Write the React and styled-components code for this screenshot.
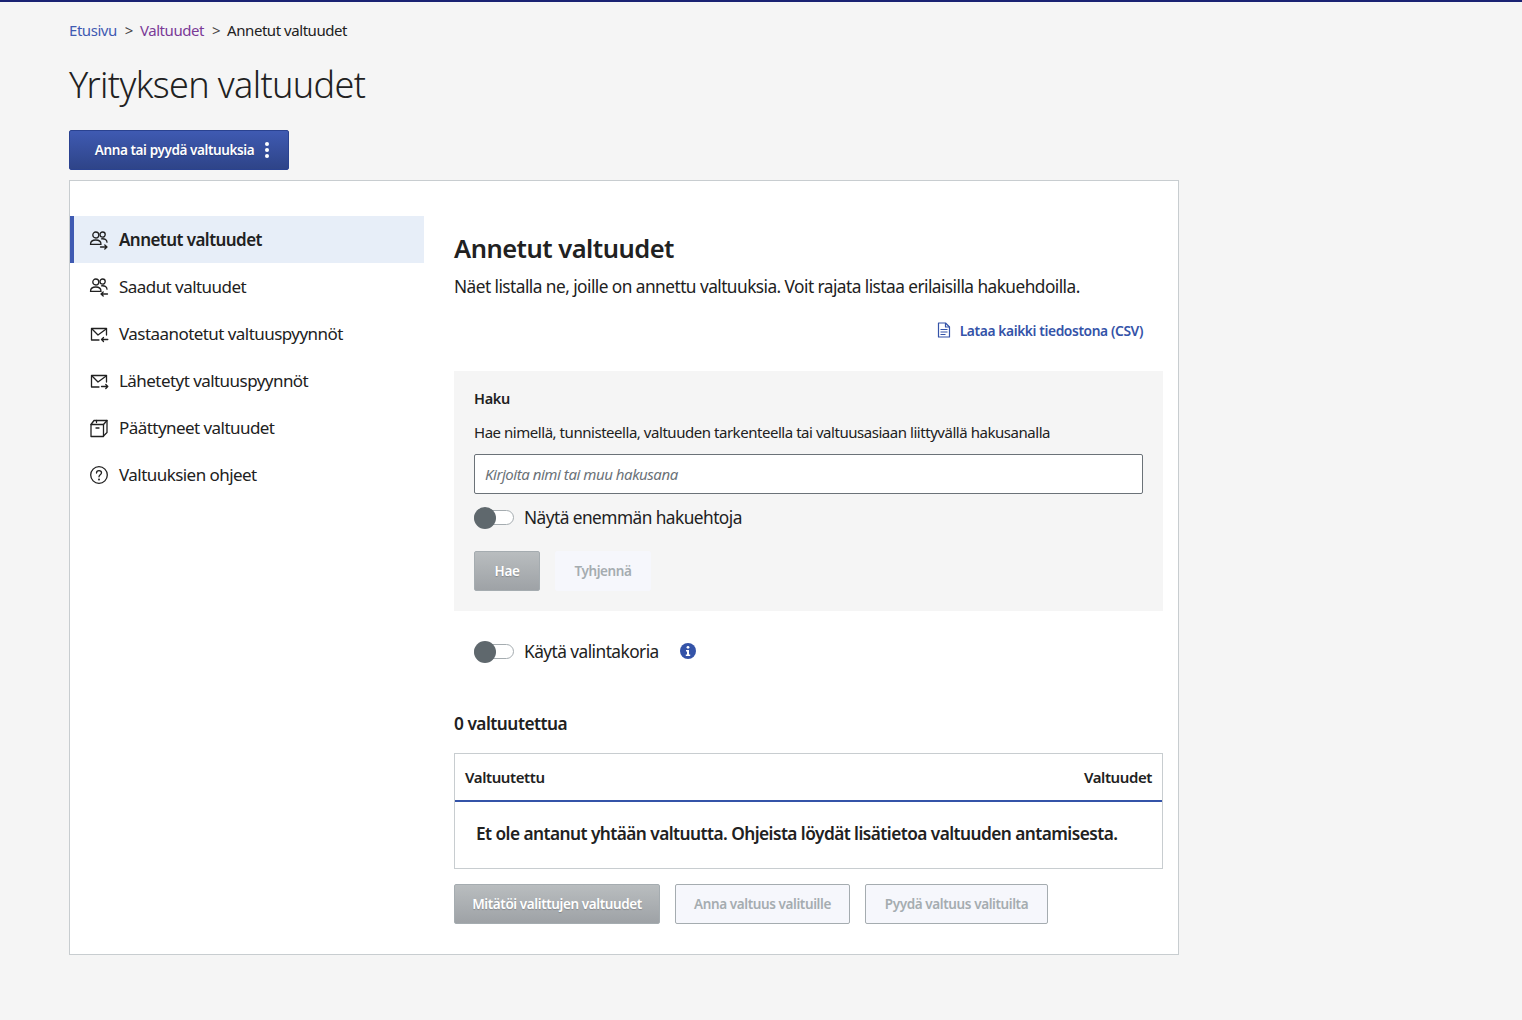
import React from "react";
import styled, { createGlobalStyle } from "styled-components";

const Global = createGlobalStyle`
  * { box-sizing: border-box; }
  html, body { margin: 0; padding: 0; }
  body { background: #f5f5f5; color: #212121; font-family: "Noto Sans", "Open Sans", sans-serif; }
`;

const Page = styled.div`
  min-height: 1020px;
  border-top: 2px solid #1a2273;
  padding: 0 0 0 69px;
`;
const Crumbs = styled.nav`
  display: flex;
  align-items: center;
  height: 20px;
  margin-top: 18px;
  font-size: 15px;
  letter-spacing: -0.45px;
  gap: 7px;
`;
const Crumb = styled.span`
  color: ${(p) => p.$color || "#212121"};
`;
const Sep = styled.span`
  color: #444;
  margin: 0 0 0 1px;
`;
const Title = styled.h1`
  margin: 20px 0 0;
  height: 50px;
  font-size: 36px;
  line-height: 50px;
  font-weight: 300;
  letter-spacing: -0.65px;
  color: #212121;
`;
const Primary = styled.button`
  display: flex;
  align-items: center;
  justify-content: center;
  height: 40px;
  border: 1px solid #2a4290;
  border-radius: 2px;
  background: linear-gradient(180deg, #3f5ab2 0%, #2e4488 100%);
  color: #fff;
  font: 600 13.5px "Noto Sans", sans-serif;
  letter-spacing: -0.4px;
  text-shadow: 0 1px 1px rgba(0,0,0,.2);
  padding: 0;
`;
const HeadButton = styled(Primary)`
  width: 220px;
  margin-top: 20px;
  padding-left: 6px;
  gap: 11px;
`;
const Disabled = styled(Primary)`
  border-color: #a5acb0;
  background: linear-gradient(180deg, #b9bdbf 0%, #9ea2a6 100%);
  width: ${(p) => p.$w}px;
`;
const Secondary = styled.button`
  height: 40px;
  width: ${(p) => p.$w}px;
  border: 1px solid ${(p) => (p.$plain ? "#f6f7fc" : "#a5acb0")};
  border-radius: 2px;
  background: #f6f7fc;
  color: #a5acb0;
  font: 600 13.5px "Noto Sans", sans-serif;
  letter-spacing: -0.4px;
  padding: 0;
`;
const Card = styled.main`
  display: flex;
  width: 1110px;
  height: 775px;
  margin-top: 10px;
  background: #fff;
  border: 1px solid #c8cdd0;
`;
const Side = styled.ul`
  list-style: none;
  margin: 35px 0 0;
  padding: 0;
  width: 354px;
  flex: none;
`;
const Item = styled.li`
  display: flex;
  align-items: center;
  height: 47px;
  gap: 10px;
  padding-left: ${(p) => (p.$active ? 15 : 19)}px;
  border-left: ${(p) => (p.$active ? "4px solid #3f5ab2" : "none")};
  background: ${(p) => (p.$active ? "#e7eef8" : "transparent")};
  font-size: 17px;
  font-weight: ${(p) => (p.$active ? 600 : 400)};
  letter-spacing: -0.55px;
  svg { width: 20px; height: 20px; flex: none; }
`;
const Content = styled.section`
  margin-left: 30px;
  width: 709px;
`;
const H2 = styled.h2`
  margin: 50px 0 0;
  height: 34px;
  font-size: 25.5px;
  line-height: 34px;
  font-weight: 600;
  letter-spacing: -0.5px;
`;
const Lead = styled.p`
  margin: 10px 0 0;
  font-size: 17.3px;
  line-height: 24px;
  letter-spacing: -0.55px;
`;
const LinkRow = styled.div`
  display: flex;
  justify-content: flex-end;
  align-items: center;
  gap: 9px;
  height: 20px;
  margin-top: 21px;
  padding-right: 20px;
  color: #3453a8;
  font-size: 13.8px;
  font-weight: 600;
  letter-spacing: -0.4px;
`;
const Search = styled.div`
  height: 240px;
  margin-top: 31px;
  background: #f5f5f5;
  padding: 17px 20px 0;
`;
const Label = styled.div`
  font-size: 14.5px;
  line-height: 20px;
  font-weight: 600;
  letter-spacing: -0.3px;
`;
const Help = styled.div`
  margin-top: 14px;
  font-size: 15px;
  line-height: 20px;
  letter-spacing: -0.46px;
`;
const Input = styled.input`
  display: block;
  width: 100%;
  height: 40px;
  margin-top: 12px;
  padding: 0 10px;
  border: 1px solid #6b7278;
  border-radius: 2px;
  background: #fff;
  font: italic 15px "Noto Sans", sans-serif;
  letter-spacing: -0.46px;
  &::placeholder { color: #6b7278; opacity: 1; }
`;
const ToggleRow = styled.div`
  display: flex;
  align-items: center;
  height: 24px;
  gap: 10px;
  margin: ${(p) => p.$m};
  font-size: 17.3px;
  letter-spacing: -0.55px;
`;
const Toggle = styled.span`
  position: relative;
  display: block;
  width: 40px;
  height: 15px;
  border: 1px solid #a5acb0;
  border-radius: 8px;
  background: #fff;
  &::before {
    content: "";
    position: absolute;
    left: -1px;
    top: -4px;
    width: 22px;
    height: 22px;
    border-radius: 50%;
    background: #5f686d;
  }
`;
const InfoDot = styled.span`
  display: flex;
  margin-left: 11px;
`;
const Buttons = styled.div`
  display: flex;
  gap: ${(p) => p.$gap}px;
  margin-top: ${(p) => p.$top}px;
`;
const Count = styled.div`
  margin-top: 49px;
  height: 24px;
  font-size: 17.3px;
  line-height: 24px;
  font-weight: 600;
  letter-spacing: -0.5px;
`;
const Table = styled.div`
  margin-top: 17px;
  height: 116px;
  border: 1px solid #c8cdd0;
`;
const THead = styled.div`
  display: flex;
  justify-content: space-between;
  align-items: center;
  height: 48px;
  padding: 0 10px;
  border-bottom: 2px solid #3453a8;
  font-size: 15px;
  font-weight: 600;
  letter-spacing: -0.4px;
`;
const Empty = styled.div`
  padding: 20px 21px 0;
  font-size: 17.3px;
  line-height: 24px;
  font-weight: 600;
  letter-spacing: -0.55px;
`;

const I = ({ children }) => (
  <svg viewBox="0 0 20 20" fill="none" stroke="#212121" strokeWidth="1.3" strokeLinecap="round" strokeLinejoin="round">{children}</svg>
);
const People = () => (
  <>
    <circle cx="6.8" cy="5" r="3" />
    <circle cx="13.6" cy="4.6" r="2.6" />
    <path d="M1.5 14.4c0-3 2-4.4 5.3-4.4s5.200 1.400 5.200 4.400z" />
    <path d="M12.500 8.800c3-.300 5.500.600 5.500 3.400" />
  </>
);
const IconGiven = () => (
  <I>
    <People />
    <path d="M11.500 17h6.500M15.800 15l2.200 2-2.200 2" />
  </I>
);
const IconReceived = () => (
  <I>
    <People />
    <path d="M18.500 17H12M14.200 15L12 17l2.200 2" />
  </I>
);
const IconMailIn = () => (
  <I>
    <path d="M10 16H2.500V4.500h15V11" />
    <path d="M2.800 4.800L9 11l8.500-6.200" />
    <path d="M18.800 15.500h-6.300M14.500 13.500l-2 2 2 2" />
  </I>
);
const IconMailOut = () => (
  <I>
    <path d="M10 16H2.500V4.500h15V11" />
    <path d="M2.800 4.800L9 11l8.500-6.200" />
    <path d="M12.500 15.500h6.300M16.800 13.500l2 2-2 2" />
  </I>
);
const IconBox = () => (
  <I>
    <path d="M2 6.500h12.500V18.500H2z" />
    <path d="M2 6.500L5 2.500h13v12l-3.500 3.500" />
    <path d="M7.500 2.500v2M7 10h3" />
    <path d="M14.500 6.500L18 2.500" />
  </I>
);
const IconHelp = () => (
  <I>
    <circle cx="10" cy="10" r="8.300" />
    <path d="M7.500 8c0-1.500 1.100-2.400 2.500-2.400s2.500.900 2.500 2.200c0 2-2.500 2-2.500 4" />
    <circle cx="10" cy="14.500" r=".4" />
  </I>
);
const Dots = () => (
  <svg width="4" height="18" viewBox="0 0 4 18" fill="#fff"><circle cx="2" cy="3" r="2" /><circle cx="2" cy="9" r="2" /><circle cx="2" cy="15" r="2" /></svg>
);
const FileIcon = () => (
  <svg width="14" height="16" viewBox="0 0 14 16" fill="none" stroke="#3453a8" strokeWidth="1.2" strokeLinejoin="round">
    <path d="M1.500 1h7l4 4v10h-11z" />
    <path d="M8.500 1v4h4" />
    <path d="M3.500 7.500h7M3.500 10h7M3.500 12.500h5" />
  </svg>
);
const Info = () => (
  <svg width="16" height="16" viewBox="0 0 16 16">
    <circle cx="8" cy="8" r="8" fill="#3453a8" />
    <circle cx="8" cy="4.300" r="1.400" fill="#fff" />
    <path d="M6 7h3v4.500h1.200V13H5.800v-1.500H7V8.400H6z" fill="#fff" />
  </svg>
);

const NAV = [
  ["Annetut valtuudet", IconGiven],
  ["Saadut valtuudet", IconReceived],
  ["Vastaanotetut valtuuspyynnöt", IconMailIn],
  ["Lähetetyt valtuuspyynnöt", IconMailOut],
  ["Päättyneet valtuudet", IconBox],
  ["Valtuuksien ohjeet", IconHelp],
];

export default function App() {
  return (
    <Page>
      <Global />
      <Crumbs>
        <Crumb $color="#3f5ab2">Etusivu</Crumb>
        <Sep>&gt;</Sep>
        <Crumb $color="#7a3a97">Valtuudet</Crumb>
        <Sep>&gt;</Sep>
        <Crumb>Annetut valtuudet</Crumb>
      </Crumbs>
      <Title>Yrityksen valtuudet</Title>
      <HeadButton>Anna tai pyydä valtuuksia <Dots /></HeadButton>
      <Card>
        <Side>
          {NAV.map(([label, Icon], i) => (
            <Item key={label} $active={i === 0}><Icon />{label}</Item>
          ))}
        </Side>
        <Content>
          <H2>Annetut valtuudet</H2>
          <Lead>Näet listalla ne, joille on annettu valtuuksia. Voit rajata listaa erilaisilla hakuehdoilla.</Lead>
          <LinkRow><FileIcon />Lataa kaikki tiedostona (CSV)</LinkRow>
          <Search>
            <Label>Haku</Label>
            <Help>Hae nimellä, tunnisteella, valtuuden tarkenteella tai valtuusasiaan liittyvällä hakusanalla</Help>
            <Input placeholder="Kirjoita nimi tai muu hakusana" />
            <ToggleRow $m="11px 0 0"><Toggle />Näytä enemmän hakuehtoja</ToggleRow>
            <Buttons $gap={15} $top={22}>
              <Disabled $w={66}>Hae</Disabled>
              <Secondary $w={96} $plain>Tyhjennä</Secondary>
            </Buttons>
          </Search>
          <ToggleRow $m="28px 0 0 20px"><Toggle />Käytä valintakoria<InfoDot><Info /></InfoDot></ToggleRow>
          <Count>0 valtuutettua</Count>
          <Table>
            <THead><span>Valtuutettu</span><span>Valtuudet</span></THead>
            <Empty>Et ole antanut yhtään valtuutta. Ohjeista löydät lisätietoa valtuuden antamisesta.</Empty>
          </Table>
          <Buttons $gap={15} $top={15}>
            <Disabled $w={206}>Mitätöi valittujen valtuudet</Disabled>
            <Secondary $w={175}>Anna valtuus valituille</Secondary>
            <Secondary $w={183}>Pyydä valtuus valituilta</Secondary>
          </Buttons>
        </Content>
      </Card>
    </Page>
  );
}
